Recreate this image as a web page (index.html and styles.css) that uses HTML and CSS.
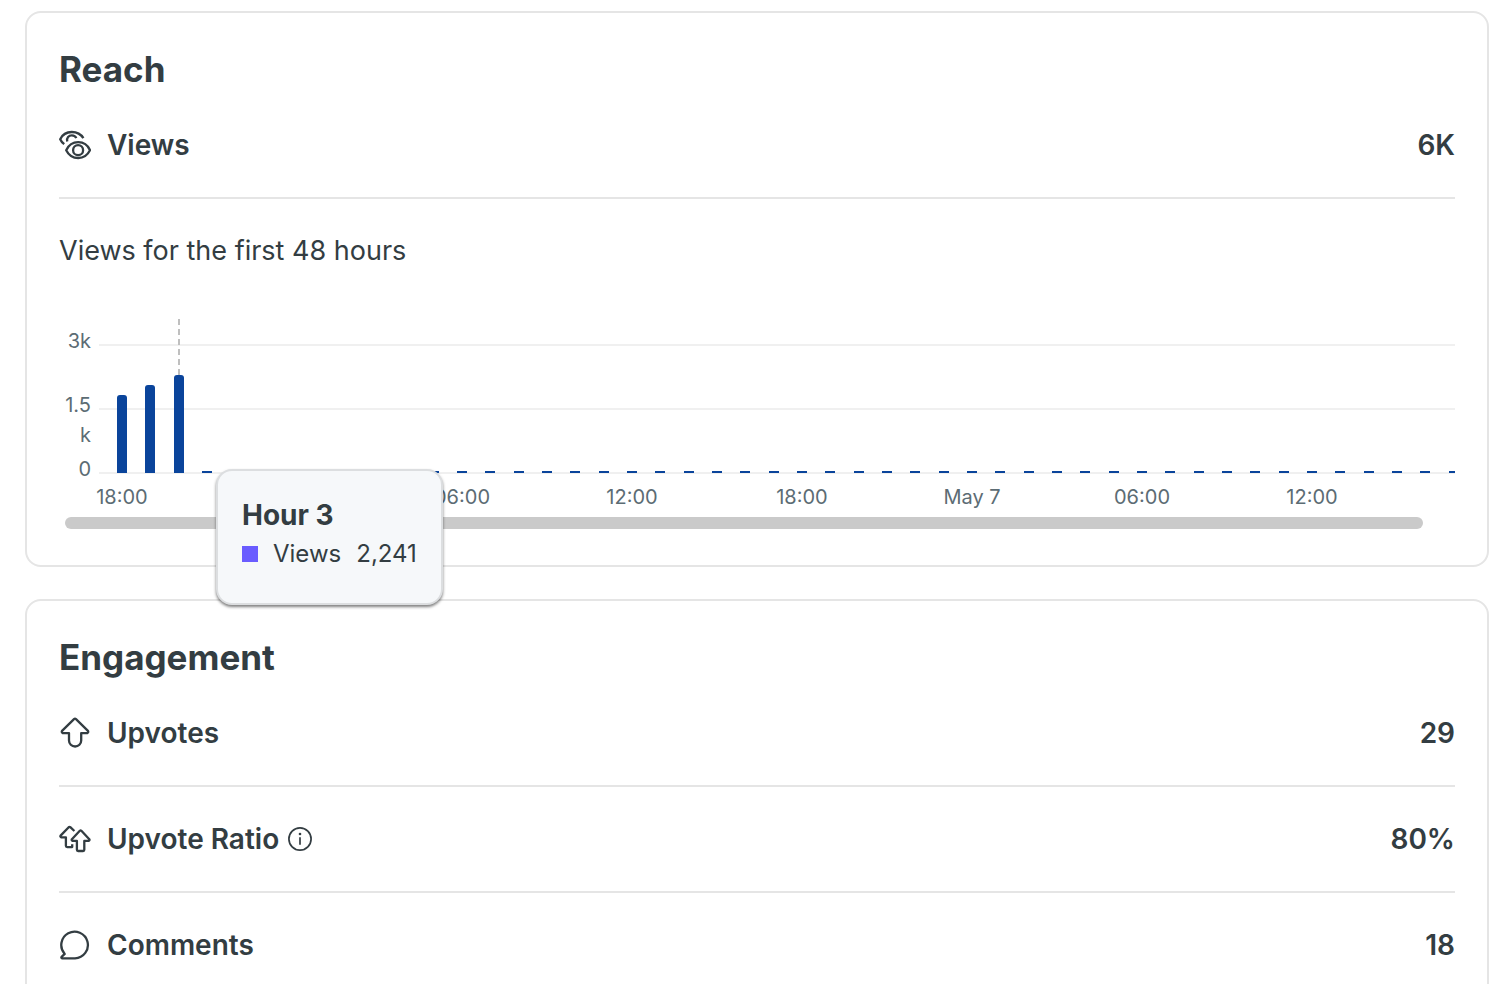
FILE: index.html
```html
<!DOCTYPE html>
<html lang="en">
<head>
    <meta charset="UTF-8">
    <meta name="viewport" content="width=device-width, initial-scale=1.0">
    <title>Post Insights</title>
    <link rel="stylesheet" href="styles.css">
</head>
<body>
    <main class="insights">
        <section class="card reach">
            <h2>Reach</h2>
            <div class="stat">
                <svg class="icon" viewBox="0 0 32 32" aria-hidden="true">
                    <path d="M5.2 15.2 C3.5 13.8 2.1 12.2 1.2 10.2 C3.5 5.4 7.8 3 12.8 3 C18 3 22 5.2 24.4 9.2"/>
                    <path d="M8.2 12.4 C7.4 8.6 9.8 6.4 12.8 6.4 C15 6.4 16.6 7.4 17.3 9.2"/>
                    <path d="M7.2 21.2 C9.8 15.8 14 13.2 19.2 13.2 C24.4 13.2 28.6 15.8 31 21.2 C28.4 26.4 24.2 29 19.2 29 C14 29 9.8 26.4 7.2 21.2 Z"/>
                    <circle cx="19.1" cy="21.2" r="5"/>
                </svg>
                <span class="label">Views</span>
                <span class="value">6K</span>
            </div>
            <h3>Views for the first 48 hours</h3>
            <div class="chart">
                <div class="y-axis">
                    <span>3k</span>
                    <span>1.5<br>k</span>
                    <span>0</span>
                </div>
                <div class="plot">
                    <div class="grid-lines"></div>
                    <div class="scroll-area">
                        <div id="bars" class="bars"></div>
                    </div>
                    <div class="x-axis">
                        <span>18:00</span>
                        <span></span>
                        <span>06:00</span>
                        <span>12:00</span>
                        <span>18:00</span>
                        <span>May 7</span>
                        <span>06:00</span>
                        <span>12:00</span>
                    </div>
                </div>
                <div class="tooltip">
                    <strong>Hour 3</strong>
                    <div class="tooltip-row">
                        <i class="swatch"></i>
                        <span>Views</span>
                        <span>2,241</span>
                    </div>
                </div>
            </div>
            <div class="scroll-thumb"></div>
        </section>

        <section class="card">
            <h2>Engagement</h2>
            <div class="stat">
                <svg class="icon" viewBox="0 0 32 32" aria-hidden="true">
                    <path d="M15 2.1 Q16 1.2 17 2.1 L28.7 13.6 Q30 15.2 28.2 16.1 H22.2 V23.4 A6.1 6.1 0 0 1 10 23.4 V16.1 H3.8 Q2 15.2 3.3 13.6 Z"/>
                </svg>
                <span class="label">Upvotes</span>
                <span class="value">29</span>
            </div>
            <div class="stat">
                <svg class="icon" viewBox="0 0 32 32" aria-hidden="true">
                    <path d="M15.4 8 L11.3 4.2 Q10.5 3.5 9.7 4.2 L1.6 12.6 Q0.9 13.9 2.3 14.3 H6.9 V22.8 Q6.9 24.1 8.2 24.1 H13.2 V21.2"/>
                    <path d="M20.8 7.8 Q21.6 7.1 22.4 7.8 L30.3 16.2 Q31 17.4 29.7 17.9 H25.3 V26.8 Q25.3 28 24.1 28 H19.1 Q17.9 28 17.9 26.8 V17.9 H13.5 Q12.2 17.4 12.9 16.2 Z"/>
                </svg>
                <span class="label">Upvote Ratio</span>
                <button class="info" type="button" aria-label="About upvote ratio">
                    <svg viewBox="0 0 24 24" aria-hidden="true">
                        <circle cx="12" cy="12" r="11.1"/>
                        <path d="M12 10.2 V17.8"/>
                        <circle class="dot" cx="12" cy="7" r="1.3"/>
                    </svg>
                </button>
                <span class="value">80%</span>
            </div>
            <div class="stat">
                <svg class="icon" viewBox="0 0 32 32" aria-hidden="true">
                    <path d="M16 29.3 H3 Q2 28.7 2.6 27.9 L5.7 24.9 A13.3 13.3 0 1 1 16 29.3 Z"/>
                </svg>
                <span class="label">Comments</span>
                <span class="value">18</span>
            </div>
        </section>
    </main>

    <script>
        // hourly views, hours without data stay at zero
        const views = [1781, 2016, 2241];
        const hours = 48;
        const maxViews = 3000;
        const bars = document.getElementById('bars');

        for (let i = 0; i < hours; i++) {
            const slot = document.createElement('div');
            slot.className = i === 2 ? 'slot active' : 'slot';

            const bar = document.createElement('div');
            bar.className = views[i] ? 'bar' : 'bar empty';
            bar.style.height = ((views[i] || 0) / maxViews * 100) + '%';

            slot.appendChild(bar);
            bars.appendChild(slot);
        }
    </script>
</body>
</html>
```
FILE: styles.css
```css
* {
    margin: 0;
    padding: 0;
    box-sizing: border-box;
}
body {
    font-family: Inter, 'Liberation Sans', sans-serif;
    font-size: 28px;
    color: #333d42;
    background: #fff;
}
.insights {
    display: flex;
    flex-direction: column;
    gap: 32px;
    padding: 11px 16px 16px 25px;
}
.card {
    border: 2px solid #e5e5e5;
    border-radius: 16px;
    padding: 32px 32px 0;
}
.reach {
    padding-bottom: 36px;
}
h2 {
    font-size: 35px;
    line-height: 48px;
    font-weight: 700;
}
h3 {
    font-size: 27px;
    line-height: 104px;
    font-weight: 400;
}
.stat {
    display: flex;
    align-items: center;
    height: 106px;
    border-bottom: 2px solid #e5e5e5;
    font-weight: 600;
}
.icon {
    width: 32px;
    height: 32px;
    margin-right: 16px;
    fill: none;
    stroke: #333d42;
    stroke-width: 2.3;
    stroke-linejoin: round;
}
.value {
    margin-left: auto;
}
.info {
    width: 24px;
    height: 24px;
    margin-left: 9px;
    border: none;
    background: none;
    cursor: pointer;
}
.info svg {
    display: block;
    fill: none;
    stroke: #333d42;
    stroke-width: 1.7;
}
.info .dot {
    fill: #333d42;
    stroke: none;
}

/* chart */
.chart {
    position: relative;
    display: flex;
    gap: 8px;
    margin-top: 16px;
    font-size: 20px;
    color: #5c6c74;
}
.y-axis {
    display: grid;
    grid-template-rows: 64px 64px 30px;
    width: 32px;
    padding-top: 7px;
    line-height: 30px;
    text-align: right;
}
.plot {
    position: relative;
    flex: 1;
    min-width: 0;
}
.grid-lines {
    position: absolute;
    inset: 25px 0 auto;
    height: 130px;
    background: repeating-linear-gradient(#f0f0f0 0 2px, transparent 2px 64px);
}
.scroll-area {
    position: relative;
    overflow: hidden;
}
.bars {
    display: flex;
    height: 154px;
    margin: 0 -13px 0 9px;
    padding-top: 24px;
}
.slot {
    position: relative;
    display: flex;
    flex: 1;
    flex-direction: column;
    align-items: center;
    justify-content: flex-end;
    padding-top: 2px;
}
.slot.active::before {
    content: '';
    position: absolute;
    top: -24px;
    bottom: 96px;
    width: 2px;
    background: repeating-linear-gradient(#bfbfbf 0 6px, transparent 6px 10px);
}
.bar {
    position: relative;
    box-sizing: content-box;
    width: 10px;
    padding-top: 2px;
    border-radius: 3px 3px 0 0;
    background: #0a449b;
}
.bar.empty {
    border-radius: 0;
}
/* pulled left so each label is centered on the first bar of its group */
.x-axis {
    display: flex;
    margin: 12px 58px 0 -62px;
    line-height: 24px;
    text-align: center;
}
.x-axis span {
    flex: 1;
}
.scroll-thumb {
    height: 12px;
    margin: 8px 32px 0 6px;
    border-radius: 6px;
    background: #cacaca;
}

/* tooltip */
.tooltip {
    position: absolute;
    z-index: 1;
    top: 150px;
    left: 157px;
    height: 136px;
    padding: 26px 24px 0 24px;
    border: 2px solid #dcdee0;
    border-radius: 16px;
    background: #f6f8fa;
    box-shadow: 0 2px 3px rgba(0, 0, 0, 0.5);
    color: #333d42;
    font-size: 24px;
}
.tooltip strong {
    display: block;
    font-size: 28px;
    line-height: 36px;
}
.tooltip-row {
    display: flex;
    align-items: center;
    gap: 15px;
    line-height: 42px;
}
.swatch {
    width: 16px;
    height: 16px;
    background: #6a5cff;
}
```
